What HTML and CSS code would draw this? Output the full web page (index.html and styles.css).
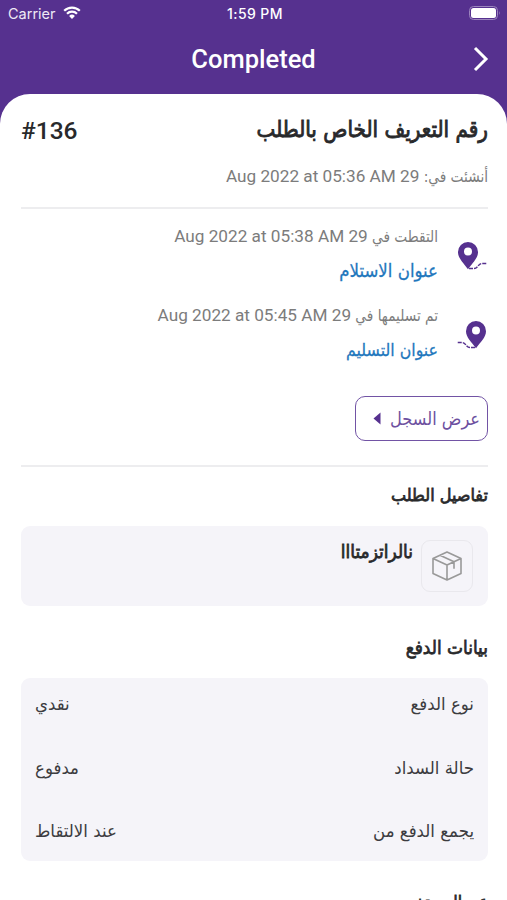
FILE: index.html
```html
<!DOCTYPE html>
<html lang="ar" dir="rtl">
<head>
<meta charset="utf-8">
<title>Completed</title>
<link rel="stylesheet" href="styles.css">
</head>
<body>
<div class="status" dir="ltr">
  <div class="carrier"><span>Carrier</span>
    <svg width="18" height="14" viewBox="0 0 18 14" fill="none" stroke="#fff" stroke-width="2.2"><path d="M1.2 4.800a11 11 0 0 1 15.600 0M4 7.800a7 7 0 0 1 10 0"/><path d="M9 13l-2.900-3a4.200 4.200 0 0 1 5.800 0z" fill="#fff" stroke="none"/></svg>
  </div>
  <div class="clock">1:59 PM</div>
  <svg class="battery" width="32" height="14" viewBox="0 0 32 14"><rect x=".5" y=".5" width="28" height="13" rx="4" fill="none" stroke="#9b84bd"/><rect x="2" y="2" width="25" height="10" rx="2.500" fill="#fff"/><path d="M30 5q1.500 2 0 4z" fill="#9b84bd"/></svg>
</div>
<header class="bar">
  <h1>Completed</h1>
  <svg class="chevron" width="16" height="26" viewBox="0 0 16 26" fill="none" stroke="#fff" stroke-width="3"><path d="M2 2l11 11L2 24"/></svg>
</header>
<main class="sheet">
  <div class="order"><h2><span class="ar t-title">رقم التعريف الخاص بالطلب</span></h2><span class="num" dir="ltr">#136</span></div>
  <p class="date created"><span class="ar t-date">أنشئت في:</span> <span>29 Aug 2022 at 05:36 AM</span></p>
  <hr>
  <section class="stop first">
    <svg class="pin" width="32" height="32" viewBox="0 0 32 32"><path fill="#56318f" fill-rule="evenodd" d="M12 1a10 10 0 0 0-10 10.200c0 6 5.500 10.800 10 17 4.500-6.200 10-11 10-17A10 10 0 0 0 12 1zm0 5.500a4 4 0 1 1 0 8 4 4 0 0 1 0-8z"/><path d="M13 27.500h5c4 0 4-5 8-5h5" fill="none" stroke="#56318f" stroke-width="1.400" stroke-dasharray="4 1"/></svg>
    <div><p class="date"><span class="ar t-date">التقطت في</span> <span>29 Aug 2022 at 05:38 AM</span></p>
    <a class="ar link">عنوان الاستلام</a></div>
  </section>
  <section class="stop">
    <svg class="pin flip" width="32" height="32" viewBox="0 0 32 32"><path fill="#56318f" fill-rule="evenodd" d="M12 1a10 10 0 0 0-10 10.200c0 6 5.500 10.800 10 17 4.500-6.200 10-11 10-17A10 10 0 0 0 12 1zm0 5.500a4 4 0 1 1 0 8 4 4 0 0 1 0-8z"/><path d="M13 27.500h5c4 0 4-5 8-5h5" fill="none" stroke="#56318f" stroke-width="1.400" stroke-dasharray="4 1"/></svg>
    <div><p class="date"><span class="ar t-date">تم تسليمها في</span> <span>29 Aug 2022 at 05:45 AM</span></p>
    <a class="ar link dropoff">عنوان التسليم</a></div>
  </section>
  <button class="log"><span class="ar">عرض السجل</span><svg width="8" height="13" viewBox="0 0 8 13"><path d="M7.500.5v12L.5 6.500z" fill="#56318f"/></svg></button>
  <hr>
  <h3 class="ar details">تفاصيل الطلب</h3>
  <div class="card item">
    <div class="thumb"><svg width="32" height="32" viewBox="0 0 32 32" fill="none" stroke="#999" stroke-width="1.600" stroke-linejoin="round"><path d="M16 2l14 6.500v15L16 30 2 23.500v-15zM2 8.500l14 6.500 14-6.500M16 15v15M9 5.300l14 6.500v7"/></svg></div>
    <span class="ar name">نالراتزمتااا</span>
  </div>
  <h3 class="ar payment">بيانات الدفع</h3>
  <div class="card rows ar">
    <div class="row"><span>نوع الدفع</span><span>نقدي</span></div>
    <div class="row"><span>حالة السداد</span><span>مدفوع</span></div>
    <div class="row"><span>يجمع الدفع من</span><span>عند الالتقاط</span></div>
  </div>
  <h3 class="ar user">عن المستخدم</h3>
</main>
</body>
</html>
```
FILE: styles.css
```css
* { box-sizing: border-box; margin: 0; }
body { height: 900px; overflow: hidden; background: #56318f; font-family: Roboto, "DejaVu Sans", sans-serif; color: #28292b; }
.ar { font-family: "DejaVu Sans", sans-serif; }
.status { height: 28px; display: grid; grid-template-columns: 1fr auto 1fr; align-items: center; padding: 0 6px 2px 8px; color: #fff; font: 14.5px Inter, sans-serif; }
.carrier { display: flex; align-items: center; gap: 7px; color: #eee9f5; }
.clock { font-size: 14px; font-weight: 500; letter-spacing: .4px; padding-left: 1px; }
.battery { justify-self: end; }
.bar { height: 66px; display: grid; grid-template-columns: 1fr auto 1fr; align-items: center; direction: ltr; padding: 0 18px 4px; color: #fff; }
.bar h1 { grid-column: 2; font-size: 25.5px; font-weight: 500; line-height: 30px; }
.chevron { justify-self: end; }
.sheet { height: 806px; overflow: hidden; background: #fff; border-radius: 30px 30px 0 0; padding: 0 19px 0 21px; }
.order { height: 69px; padding-top: 4px; display: flex; justify-content: space-between; align-items: center; }
.order h2 { line-height: 30px; font-size: 20px; font-weight: 400; }
.t-title { display: inline-block; transform: translateY(-2px) scaleY(1.15); -webkit-text-stroke: .8px; }
.num { font-size: 24.5px; font-weight: 500; }
.date { height: 24px; line-height: 24px; font-size: 17.2px; color: #7c7c7c; white-space: nowrap; }
.t-date { display: inline-block; font-size: 13.7px; transform: translateY(-1px) scaleY(1.15); }
.created { height: 44px; padding-top: 1px; }
hr { border: 0; height: 2px; background: #ededef; }
.stop { display: flex; gap: 18px; height: 79px; }
.first { margin-top: 15px; }
.pin { margin-top: 17px; }
.flip { transform: scaleX(-1); }
.link { display: block; color: #1f77bd; font-size: 16.6px; line-height: 24px; margin-top: 12px; transform: scaleY(1.1); -webkit-text-stroke: .25px; }
.dropoff { font-size: 15.8px; }
.log { margin: 14px 0 24px; width: 133px; height: 45px; border: 1.5px solid #7254a5; border-radius: 10px; background: #fff; color: #6d50a0; display: flex; align-items: center; justify-content: space-between; padding: 0 7px 0 17px; font-size: 16.2px; }
.log span { transform: scaleY(1.12); }
h3 { font-size: 17px; line-height: 24px; font-weight: 400; transform: scaleY(1.08); -webkit-text-stroke: .7px; }
.details { margin-top: 17px; font-size: 16.1px; }
.card { background: #f5f4f9; border-radius: 9px; }
.item { height: 80px; margin-top: 18px; display: flex; gap: 8px; padding: 14px 15px; }
.thumb { width: 52px; height: 52px; border: 1px solid #e9e8ed; border-radius: 9px; display: grid; place-items: center; }
.name { font-size: 17px; line-height: 24px; height: 24px; transform: scaleY(1.08); -webkit-text-stroke: .7px; }
.payment { margin-top: 30px; }
.rows { margin-top: 18px; height: 183px; padding: 15px 14px 17px; display: flex; flex-direction: column; justify-content: space-between; font-size: 16.6px; color: #3c3c40; }
.row { display: flex; justify-content: space-between; line-height: 24px; transform: scaleY(1.06); }
.user { margin-top: 30px; font-size: 15.5px; }
```
